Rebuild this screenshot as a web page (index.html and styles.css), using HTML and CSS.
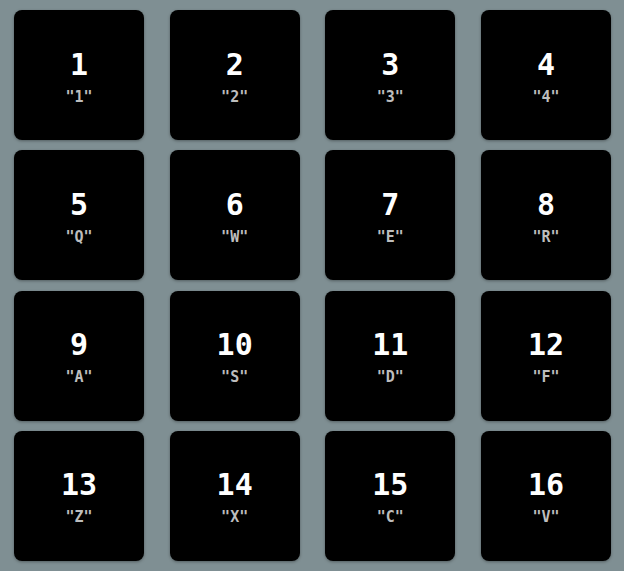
FILE: index.html
```html
<!DOCTYPE html>
<html>
<head>
<meta charset="utf-8">
<link rel="stylesheet" href="styles.css">
</head>
<body>
<div class="grid">
  <div class="key"><div class="num">1</div><div class="lbl">"1"</div></div>
  <div class="key"><div class="num">2</div><div class="lbl">"2"</div></div>
  <div class="key"><div class="num">3</div><div class="lbl">"3"</div></div>
  <div class="key"><div class="num">4</div><div class="lbl">"4"</div></div>
  <div class="key"><div class="num">5</div><div class="lbl">"Q"</div></div>
  <div class="key"><div class="num">6</div><div class="lbl">"W"</div></div>
  <div class="key"><div class="num">7</div><div class="lbl">"E"</div></div>
  <div class="key"><div class="num">8</div><div class="lbl">"R"</div></div>
  <div class="key"><div class="num">9</div><div class="lbl">"A"</div></div>
  <div class="key"><div class="num">10</div><div class="lbl">"S"</div></div>
  <div class="key"><div class="num">11</div><div class="lbl">"D"</div></div>
  <div class="key"><div class="num">12</div><div class="lbl">"F"</div></div>
  <div class="key"><div class="num">13</div><div class="lbl">"Z"</div></div>
  <div class="key"><div class="num">14</div><div class="lbl">"X"</div></div>
  <div class="key"><div class="num">15</div><div class="lbl">"C"</div></div>
  <div class="key"><div class="num">16</div><div class="lbl">"V"</div></div>
</div>
</body>
</html>
```
FILE: styles.css
```css
html, body {
  margin: 0;
  padding: 0;
  background: #7f8f93;
  width: 624px;
  height: 571px;
  overflow: hidden;
}
.grid {
  box-sizing: border-box;
  width: 624px;
  height: 571px;
  padding: 10px 13px 10px 14px;
  display: grid;
  grid-template-columns: repeat(4, 130px);
  grid-template-rows: repeat(4, 130px);
  justify-content: space-between;
  align-content: space-between;
}
.key {
  background: #000;
  border-radius: 8px;
  box-shadow: 0 1px 3px rgba(0,0,0,0.35);
  display: flex;
  flex-direction: column;
  align-items: center;
  justify-content: center;
  font-family: "DejaVu Sans Mono", monospace;
  padding-top: 4px;
  box-sizing: border-box;
}
.num {
  color: #fff;
  font-weight: bold;
  font-size: 30px;
  line-height: 34px;
}
.lbl {
  color: #bdbdbd;
  font-weight: bold;
  font-size: 15px;
  line-height: 20px;
  margin-top: 5px;
}
```
